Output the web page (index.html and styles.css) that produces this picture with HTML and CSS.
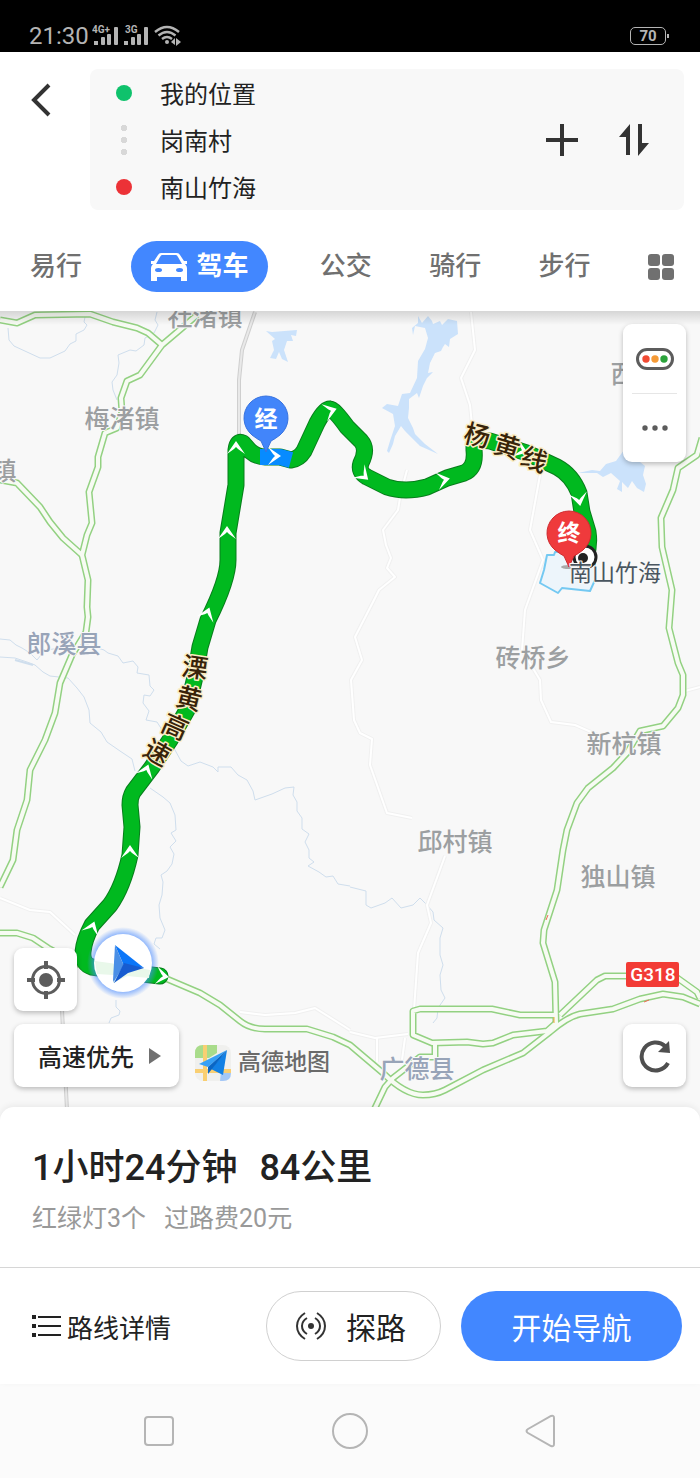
FILE: index.html
```
<!DOCTYPE html>
<html lang="zh-CN">
<head>
    <meta charset="UTF-8">
    <meta name="viewport" content="width=device-width, initial-scale=1.0">
    <title>高德地图 - 路线规划</title>
    <link rel="stylesheet" href="styles.css">
</head>
<body>
    <div class="status-bar">
        <span class="clock">21:30</span>
        <svg class="signals" width="92" height="24" viewBox="0 0 92 24" aria-hidden="true">
            <g fill="#b4b4b4">
                <text x="0" y="9" class="net">4G+</text>
                <text x="33" y="9" class="net">3G</text>
                <rect x="2" y="17" width="4" height="4"/>
                <rect x="9" y="13" width="4" height="8" rx="1"/>
                <rect x="15" y="10" width="4" height="11" rx="1"/>
                <rect x="22" y="3" width="4" height="18" rx="1"/>
                <rect x="32" y="17" width="4" height="4"/>
                <rect x="39" y="13" width="4" height="8" rx="1"/>
                <rect x="45" y="10" width="4" height="11" rx="1"/>
                <rect x="52" y="3" width="4" height="18" rx="1"/>
                <circle cx="75" cy="18" r="2"/>
                <path d="M79 18l4-4v7zM84 14l5 4-5 4z"/>
            </g>
            <g fill="none" stroke="#b4b4b4" stroke-width="2.4">
                <path d="M63 8q12-10 24 0M66.500 11.500q8.500-7 17 0M70 15q5-4 10 0"/>
            </g>
        </svg>
        <span class="battery">70</span>
    </div>

    <header class="header">
        <div class="search">
            <button class="back" aria-label="返回">
                <svg width="20" height="34" viewBox="0 0 20 34"><path d="M18 2L3 17l15 15" fill="none" stroke="#333" stroke-width="4"/></svg>
            </button>
            <div class="stops">
                <ul class="stop-list">
                    <li><span class="dot start"></span>我的位置</li>
                    <li><span class="dots"></span>岗南村</li>
                    <li><span class="dot end"></span>南山竹海</li>
                </ul>
                <button aria-label="添加途经点">
                    <svg width="32" height="32" viewBox="0 0 32 32"><path d="M16 0v32M0 16h32" stroke="#333" stroke-width="4"/></svg>
                </button>
                <button aria-label="交换起终点">
                    <svg width="32" height="32" viewBox="0 0 32 32"><path d="M12 0v31H8V13H1zM20 0h4v19h7L20 32z" fill="#333"/></svg>
                </button>
            </div>
        </div>
        <nav class="tabs">
            <button class="tab">易行</button>
            <button class="tab active">
                <svg width="36" height="30" viewBox="0 0 36 30">
                    <path d="M10 1h16q2 0 3 2l4 6h3v3h-2q2 2 2 4v13h-6v-4H6v4H0V16q0-2 2-4H0V9h3l4-6q1-2 3-2z" fill="#fff"/>
                    <path d="M11 3h14q1 0 2 2l4 7H5l4-7q1-2 2-2z" fill="#4287ff"/>
                    <ellipse cx="7.500" cy="18" rx="3.500" ry="2" fill="#4287ff"/>
                    <ellipse cx="28.500" cy="18" rx="3.500" ry="2" fill="#4287ff"/>
                </svg>
                驾车
            </button>
            <button class="tab">公交</button>
            <button class="tab">骑行</button>
            <button class="tab">步行</button>
            <button class="tab" aria-label="更多">
                <svg width="26" height="26" viewBox="0 0 26 26" fill="#707070">
                    <rect width="12" height="12" rx="3"/><rect x="14" width="12" height="12" rx="3"/>
                    <rect y="14" width="12" height="12" rx="3"/><rect x="14" y="14" width="12" height="12" rx="3"/>
                </svg>
            </button>
        </nav>
    </header>

    <main class="map">
        <svg class="map-canvas" viewBox="0 311 700 810">
            <defs>
                <g id="roads">
                    <path d="M0 320L17 323 35 315 90 314 113 322 137 328 148 333 162 345"/>
                    <path d="M197 315L182 328 162 345 140 375 127 381 121 398 122 412 117 428 105 433 98 457 98 467 89 492 92 523 87 535 82 555 88 580 87 607 88 617 86 632 72 655 60 683 55 713 45 740 30 770 27 800 17 830 13 860 0 887"/>
                    <path d="M0 480L17 483 40 507 50 522 63 538 82 555"/>
                    <path d="M0 933H17L33 938 48 948 80 965"/>
                    <path d="M160 976L200 993 220 1005 240 1021 Q250 1029 265 1029H307L333 1037 350 1045 383 1073 Q405 1095 423 1095 Q435 1095 445 1090L483 1070 523 1053 550 1032 Q567 1017 580 1014L613 1009 640 999 663 994 683 997 700 1004"/>
                    <path d="M557 1015H520L492 1009H420L413 1011V1035L432 1043 467 1042 483 1044 493 1043 513 1035 547 1031 557 1022"/>
                    <path d="M435 1043V1057H420L393 1078 385 1087 374 1110"/>
                    <path d="M702 438L697 455 678 468 673 490 661 518 662 547 672 590 669 628 678 663 683 675 683 695 678 708 663 726 640 731 627 753 613 768 588 788 577 803 567 830 563 850 557 890 544 930 543 943 555 982 556 1023"/>
                    <path d="M560 1015L597 980 605 976H627M676 977L697 992 700 998"/>
                </g>
                <g id="lanes">
                    <path d="M471 312L475 350 461 378 470 405 472 425"/>
                    <path d="M407 470L401 492 398 510 383 530 386 545 391 558 387 568 395 577 379 590 374 600 355 637 362 660 351 680 354 720 360 733 372 739 370 765 387 813 412 818"/>
                    <path d="M540 475L530 530 543 560 525 610 522 650 540 680 541 700 551 722 575 725 598 735"/>
                    <path d="M445 856L427 905 431 923 418 953 414 1010"/>
                    <path d="M350 1032L375 1038 408 1034M377 1038V1062M405 1038L402 1060"/>
                    <path d="M0 898L30 910 50 912 75 935M685 691L700 687"/>
                    <path d="M240 1012L265 1015 295 1013 315 1008 350 1030"/>
                </g>
                <path id="route" d="M160 976L125 972 92 967 Q82 964 83 952 Q84 940 92 925L110 905 Q123 887 130 855L132 827 130 805 Q130 797 133 792L152 767 170 740 187 710 195 677 200 647 208 620 Q228 580 228 560V533L236 485V450Q237 440 243 443L250 451Q257 457 265 457H280L291 460Q299 459 304 451L317 423 Q325 408 330 409 Q334 409 347 427L361 441Q368 449 361 463 Q358 472 367 477L387 487 Q405 493 427 487L447 478 464 473Q476 468 474 450V444Q479 439 490 441L527 453 557 467Q572 475 579 493L582 512 588 532Q590 545 586 557"/>
                <path id="arrow" d="M0 -7L9 6 2 1 0 -1 -2 1 -9 6z"/>
                <linearGradient id="shade" x1="0" y1="0" x2="0" y2="1">
                    <stop offset="0" stop-color="#000" stop-opacity=".14"/>
                    <stop offset="1" stop-color="#000" stop-opacity="0"/>
                </linearGradient>
                <radialGradient id="glow">
                    <stop offset=".8" stop-color="#4d8dff" stop-opacity=".6"/>
                    <stop offset="1" stop-color="#4d8dff" stop-opacity="0"/>
                </radialGradient>
            </defs>

            <rect y="311" width="700" height="810" fill="#f8f8f8"/>

            <!-- lakes -->
            <g fill="#cbe2fb" stroke-linejoin="round">
                <path d="M266 331L272 332 297 330 296 336 291 335 293 341 287 341 284 350 288 362 282 359 279 352 276 359 270 358 274 350 272 341 275 339z"/>
                <path d="M433 324L440 321 442 325 448 319 457 321 458 334 450 339 449 347 445 344 443 347 441 351 435 353 430 363 428 373 433 372 427 378 423 386 419 398 417 393 409 399 409 408 408 418 413 428 415 434 425 444 438 454 420 446 405 431 401 426 395 436 393 444 389 453 387 451 390 441 395 426 393 414 382 408 387 404 398 406 402 394 410 393 417 378 418 361 425 349 428 338 425 328 415 326 413 335 412 328 418 323 418 316 422 323 428 316 432 321z"/>
                <path d="M578 473L592 470 600 471 606 464 616 461 624 450 640 462 645 466 643 475 646 484 644 492 637 488 632 481 628 488 622 482 622 492 617 489 620 481 611 473 603 477 597 473z"/>
            </g>

            <!-- rivers -->
            <g class="river">
                <path d="M85 317L84 322 87 325 84 330 76 334 76 341 70 344 65 351 50 358 40 358 27 352 14 346 9 340 8 328M157 312L155 320 158 325 154 333 145 338 144 345 136 351 130 350 118 355 119 363 117 375 112 382 113 390 117 400"/>
                <path d="M0 639L10 640 16 645 22 648 30 653 37 660 45 650 88 645 104 650 108 653 118 656 123 663 133 661 138 667 137 673 149 675 150 686 154 690 150 696 144 695 143 703 149 711 146 720 157 722 175 750 181 761 188 766 200 762 213 767 218 772 218 767 231 767 238 775 247 780 253 791 255 800 272 794 285 788 294 787 293 795 297 802 297 811 302 818 302 829 309 834 305 842 309 850 309 858 314 862 308 866 319 872 326 877 333 876 338 884 350 886"/>
                <path d="M0 657L15 658 27 662 35 665 43 672 50 676 68 678 77 688 84 697 89 710 90 723 101 732 107 742 120 751 132 759 135 771M150 788L163 797 170 803 175 815 176 830 171 833 176 841 170 847 174 854 172 864 167 871 161 875 163 882 162 895 159 905 160 918 165 930 162 938 156 938 154 944 160 949"/>
                <path stroke-width="2" d="M15 660L33 665"/>
                <path d="M350 887L366 891 366 905 371 908 385 903 392 898 401 908 413 905 420 898 427 905 433 912 434 920 443 928 440 938 440 955 443 965 440 975 441 990 445 998 438 1008 437 1018 433 1023M116 1000L116 1007 120 1011 119 1015 111 1018 109 1023"/>
            </g>

            <!-- minor roads -->
            <use href="#lanes" class="lane-edge"/>
            <use href="#lanes" class="lane-fill"/>
            <g class="railway">
                <path d="M255 312L242 350 239 380V440M62 1010L67 1110" stroke="#cfcfcf" stroke-width="4"/>
                <path d="M255 312L242 350 239 380V440M62 1010L67 1110" stroke="#e9e9e9" stroke-width="2"/>
            </g>

            <use href="#roads" class="road-edge"/>
            <use href="#roads" class="road-fill"/>
            <path d="M554 1017v6" stroke="#f3ac3c"/>
            <path d="M644 1002l5-2M546 920l2-5" stroke="#f06b55"/>

            <path class="region" d="M555 552L554 555 547 555 544 570 540 583 558 593 562 588 590 591 595 580V560L580 550z"/>

            <use href="#route" class="route-edge"/>
            <use href="#route" class="route-fill"/>
            <path d="M260 457H280L291 460" class="route-via"/>

            <g fill="#fff">
                <use href="#arrow" transform="translate(162 976) rotate(98)"/>
                <use href="#arrow" transform="translate(92 928) rotate(20)"/>
                <use href="#arrow" transform="translate(130 852)"/>
                <use href="#arrow" transform="translate(146 771) rotate(20)"/>
                <use href="#arrow" transform="translate(207 614) rotate(20)"/>
                <use href="#arrow" transform="translate(227 533)"/>
                <use href="#arrow" transform="translate(236 448)"/>
                <use href="#arrow" transform="translate(274 456) rotate(90)"/>
                <use href="#arrow" transform="translate(330 411) rotate(72)"/>
                <use href="#arrow" transform="translate(363 475) rotate(132)"/>
                <use href="#arrow" transform="translate(443 480) rotate(78)"/>
                <use href="#arrow" transform="translate(521 450) rotate(110)"/>
                <use href="#arrow" transform="translate(579 499) rotate(170)"/>
            </g>

            <!-- place names -->
            <g class="place">
                <text x="205" y="326">社渚镇</text>
                <text x="122" y="428">梅渚镇</text>
                <text x="4" y="480">镇</text>
                <text x="623" y="383">西</text>
                <text x="533" y="667">砖桥乡</text>
                <text x="624" y="753">新杭镇</text>
                <text x="455" y="851">邱村镇</text>
                <text x="618" y="886">独山镇</text>
                <text x="64" y="653" class="county">郎溪县</text>
                <text x="417" y="1078" class="county">广德县</text>
            </g>
            <g class="road-name">
                <text transform="translate(477 436) rotate(14)" y="9">杨</text>
                <text transform="translate(507 447) rotate(17)" y="9">黄</text>
                <text transform="translate(534 460) rotate(20)" y="9">线</text>
                <text transform="translate(195 668) rotate(8)" y="9">溧</text>
                <text transform="translate(189 699) rotate(14)" y="9">黄</text>
                <text transform="translate(175 727) rotate(24)" y="9">高</text>
                <text transform="translate(157 753) rotate(30)" y="9">速</text>
            </g>
            <rect x="626" y="962" width="53" height="25" rx="2" fill="#f23b35"/>
            <text x="653" y="981" class="shield">G318</text>

            <!-- destination ring, pins -->
            <circle cx="585" cy="557" r="11" fill="#fff" stroke="#222" stroke-width="3"/>
            <circle cx="583" cy="558" r="5" fill="#222"/>
            <ellipse cx="569" cy="567" rx="8" ry="2" fill="#aaa"/>
            <path d="M569 567L564 556Q560 554 555 550A22 22 0 1 1 583 550Q578 554 574 556z" fill="#ef3a3c" stroke="#cf2b30"/>
            <text x="569" y="541" class="pin">终</text>
            <path d="M266 452L261 441Q257 439 252 435A22 22 0 1 1 280 435Q275 439 271 441z" fill="#4285fa" stroke="#3873df"/>
            <text x="266" y="427" class="pin">经</text>
            <text x="615" y="581" class="poi">南山竹海</text>

            <!-- current position -->
            <circle cx="123" cy="963" r="36" fill="url(#glow)"/>
            <circle cx="123" cy="963" r="29" fill="#fff"/>
            <path d="M95 961Q120 964 150 970L149 978Q120 975 97 974z" fill="#e9f8ea"/>
            <path d="M115 945L144 968 124 966z" fill="#0b76f8"/>
            <path d="M115 945L124 966 114 983 113 980z" fill="#4a8fe6"/>
            <path d="M144 968L124 965 113 983z" fill="#e9f8ea"/>
            <path d="M144 968L124 963 114 983 128 973z" fill="#175cd0"/>

            <rect y="311" width="700" height="14" fill="url(#shade)"/>
        </svg>

        <div class="float side-tools">
            <button aria-label="路况">
                <svg width="38" height="22" viewBox="0 0 38 22">
                    <rect x="1.500" y="1.500" width="35" height="19" rx="9.500" fill="#fff" stroke="#5c5c5c" stroke-width="3"/>
                    <circle cx="10" cy="11" r="3.700" fill="#f04a33"/><circle cx="19" cy="11" r="3.700" fill="#f59a36"/><circle cx="28" cy="11" r="3.700" fill="#2ba33b"/>
                </svg>
            </button>
            <button aria-label="更多工具">
                <svg width="26" height="6" viewBox="0 0 26 6" fill="#5c5c5c"><circle cx="3" cy="3" r="2.700"/><circle cx="13" cy="3" r="2.700"/><circle cx="23" cy="3" r="2.700"/></svg>
            </button>
        </div>

        <div class="bottom-tools">
            <div class="left-tools">
                <button class="float square" aria-label="定位">
                    <svg width="38" height="38" viewBox="0 0 38 38">
                        <path d="M19 0v8M19 30v8M0 19h8M30 19h8" stroke="#5c5c5c" stroke-width="4"/>
                        <circle cx="19" cy="19" r="13.500" fill="none" stroke="#5c5c5c" stroke-width="3"/>
                        <circle cx="19" cy="19" r="7" fill="#5c5c5c"/>
                    </svg>
                </button>
                <div class="prefer-row">
                    <button class="float prefer">高速优先
                        <svg width="12" height="16" viewBox="0 0 12 16"><path d="M0 0l12 8-12 8z" fill="#707070"/></svg>
                    </button>
                    <div class="logo">
                        <svg width="36" height="36" viewBox="0 0 36 36">
                            <rect width="36" height="36" rx="8" fill="#f0f0ee"/>
                            <path d="M8 0h14v8l-8 5H0V8Q0 0 8 0z" fill="#a9dc8b"/>
                            <path d="M25 36l1-9 10-2v3q0 8-8 8z" fill="#a5c8f7"/>
                            <path d="M10 0v36M0 26h36" stroke="#f9cf72" stroke-width="4"/>
                            <path d="M32 5L4 19l9 3z" fill="#36a0f6"/>
                            <path d="M32 5L16 24l12 6z" fill="#1280e4"/>
                            <path d="M32 5L13 22v7l4-5z" fill="#0a66c4"/>
                        </svg>
                        <span>高德地图</span>
                    </div>
                </div>
            </div>
            <button class="float square" aria-label="刷新">
                <svg width="34" height="34" viewBox="0 0 34 34">
                    <path d="M30 24A14 14 0 1 1 27 7" fill="none" stroke="#4f4f4f" stroke-width="4"/>
                    <path d="M31 2l1 12-12-1z" fill="#4f4f4f"/>
                </svg>
            </button>
        </div>
    </main>

    <section class="panel">
        <div class="summary">
            <h1><span>1小时24分钟</span><span>84公里</span></h1>
            <p><span>红绿灯3个</span><span>过路费20元</span></p>
        </div>
        <div class="actions">
            <a class="detail" href="#detail">
                <svg width="29" height="22" viewBox="0 0 29 22"><path d="M6 2h23M6 11h23M6 20h23" stroke="#222" stroke-width="2"/><path d="M0 2h4M0 11h4M0 20h4" stroke="#222" stroke-width="4"/></svg>
                路线详情
            </a>
            <button class="explore">
                <svg width="30" height="28" viewBox="0 0 30 28" fill="none" stroke="#333" stroke-width="2">
                    <circle cx="15" cy="14" r="3" fill="#333" stroke="none"/>
                    <path d="M11 6q-5 3-5 8t5 8M19 6q5 3 5 8t-5 8M9 1Q1 6 1 14t8 13M21 1q8 5 8 13t-8 13"/>
                </svg>
                探路
            </button>
            <button class="go">开始导航</button>
        </div>
    </section>

    <footer class="nav-bar">
        <button aria-label="最近任务"><svg width="36" height="36" viewBox="0 0 36 36"><rect x="4" y="4" width="28" height="28" rx="3"/></svg></button>
        <button aria-label="主屏幕"><svg width="36" height="36" viewBox="0 0 36 36"><circle cx="18" cy="18" r="17"/></svg></button>
        <button aria-label="返回"><svg width="36" height="36" viewBox="0 0 36 36"><path d="M5 16L28 3q3-1 3 2v26q0 3-3 2L5 20q-3-2 0-4z"/></svg></button>
    </footer>
</body>
</html>
```
FILE: styles.css
```
/* General Styles */
* {
    box-sizing: border-box;
}

body {
    margin: 0;
    min-height: 100vh;
    display: flex;
    flex-direction: column;
    font-family: Roboto, "Noto Sans CJK SC", sans-serif;
    color: #222;
    background-color: #fff;
}

button {
    padding: 0;
    border: none;
    background: none;
    font: inherit;
    color: inherit;
    cursor: pointer;
}

svg {
    display: block;
    flex: none;
}

/* Status bar */
.status-bar {
    display: flex;
    align-items: center;
    height: 52px;
    padding: 20px 34px 0 29px;
    background-color: #000;
    color: #b4b4b4;
}

.clock {
    font-size: 24px;
    margin-right: 3px;
}

.net {
    font-size: 10px;
    font-weight: 700;
}

.battery {
    position: relative;
    width: 36px;
    height: 18px;
    margin-left: auto;
    border: 1px solid #b4b4b4;
    border-radius: 5px;
    font-size: 15px;
    font-weight: 700;
    line-height: 17px;
    text-align: center;
}

.battery::after {
    content: "";
    position: absolute;
    top: 6px;
    right: -4px;
    width: 2px;
    height: 4px;
    background-color: #b4b4b4;
}

/* Header */
.header {
    background-color: #fff;
}

.search {
    display: flex;
    align-items: flex-start;
    padding: 17px 16px 0 31px;
}

.back {
    width: 20px;
    margin: 14px 39px 0 0;
}

.stops {
    flex: 1;
    display: flex;
    align-items: center;
    gap: 40px;
    padding-right: 34px;
    border-radius: 8px;
    background-color: #f8f8f8;
}

.stop-list {
    flex: 1;
    margin: 0;
    padding: 0 0 0 26px;
    list-style: none;
    font-size: 24px;
}

.stop-list li {
    display: flex;
    align-items: center;
    gap: 28px;
    height: 47px;
}

.dot {
    width: 16px;
    height: 16px;
    border-radius: 50%;
}

.start {
    background-color: #0fc26c;
}

.end {
    background-color: #ec3237;
}

.dots {
    width: 16px;
    height: 30px;
    background: radial-gradient(circle, #d8d8d8 3px, transparent 3px) center / 16px 12px;
    background-position: 0 -3px;
}

/* Tabs */
.tabs {
    display: flex;
    justify-content: space-between;
    align-items: center;
    padding: 31px 26px 19px 30px;
}

.tab {
    font-size: 26px;
    font-weight: 500;
    line-height: 51px;
    color: #707070;
}

.tab.active {
    display: flex;
    align-items: center;
    gap: 9px;
    margin: 0 -6px 0 -8px;
    padding: 0 20px;
    border-radius: 26px;
    background-color: #4287ff;
    color: #fff;
    font-weight: 700;
}

/* Map */
.map {
    position: relative;
}

.map-canvas {
    width: 100%;
    height: auto;
}

.river,
.railway,
.lane-edge,
.lane-fill,
.road-edge,
.road-fill,
.route-edge,
.route-fill,
.route-via {
    fill: none;
    stroke-linejoin: round;
}

.river {
    stroke: #cfdeed;
    stroke-width: 1px;
}

.lane-edge {
    stroke: #f0f0f0;
    stroke-width: 4px;
}

.lane-fill {
    stroke: #fff;
    stroke-width: 2px;
}

.road-edge {
    stroke: #93d182;
    stroke-width: 7px;
}

.road-fill {
    stroke: #f7fbf3;
    stroke-width: 4px;
}

.route-edge {
    stroke: #087d1c;
    stroke-width: 17px;
    stroke-linecap: round;
}

.route-fill {
    stroke: #00b91f;
    stroke-width: 15px;
    stroke-linecap: round;
}

.route-via {
    stroke: #078bff;
    stroke-width: 16px;
}

.region {
    fill: #edf5fb;
    stroke: #74c9f2;
    stroke-width: 2px;
    stroke-linejoin: round;
}

.place,
.road-name,
.pin,
.poi,
.shield {
    text-anchor: middle;
    paint-order: stroke;
    stroke-linejoin: round;
}

.place {
    font-size: 25px;
    font-weight: 500;
    fill: #9c9fa1;
    stroke: #f8f8f8;
    stroke-width: 2px;
}

.county {
    fill: #98a4b8;
}

.road-name {
    font-size: 26px;
    font-weight: 500;
    fill: #382309;
    stroke: #fbedc4;
    stroke-width: 3px;
}

.pin {
    font-size: 23px;
    font-weight: 700;
    fill: #fff;
}

.poi {
    font-size: 23px;
    fill: #4a5660;
    stroke: #f8f8f8;
    stroke-width: 2px;
}

.shield {
    font-size: 19px;
    font-weight: 500;
    fill: #fff;
}

/* Map controls */
.float {
    border-radius: 9px;
    background-color: #fff;
    box-shadow: 0 2px 5px rgba(0, 0, 0, 0.25);
}

.side-tools {
    position: absolute;
    top: 13px;
    right: 14px;
    width: 63px;
    padding: 0 9px;
}

.side-tools button {
    display: flex;
    align-items: center;
    justify-content: center;
    width: 100%;
    height: 69px;
}

.side-tools button + button {
    border-top: 1px solid #e6e6e6;
}

.bottom-tools {
    position: absolute;
    left: 14px;
    right: 14px;
    bottom: 34px;
    display: flex;
    justify-content: space-between;
    align-items: flex-end;
}

.left-tools {
    display: flex;
    flex-direction: column;
    gap: 13px;
}

.square {
    display: flex;
    align-items: center;
    justify-content: center;
    width: 63px;
    height: 63px;
}

.prefer-row {
    display: flex;
    align-items: center;
    gap: 16px;
}

.prefer {
    display: flex;
    align-items: center;
    gap: 15px;
    height: 63px;
    padding: 0 18px 0 24px;
    font-size: 24px;
    font-weight: 500;
}

.logo {
    display: flex;
    align-items: center;
    gap: 7px;
    padding-top: 14px;
    font-size: 23px;
    font-weight: 500;
    line-height: 36px;
    color: #6a6a6a;
}

/* Bottom panel */
.panel {
    position: relative;
    margin-top: -14px;
    border-radius: 14px 14px 0 0;
    background-color: #fff;
    box-shadow: 0 -2px 6px rgba(0, 0, 0, 0.06);
}

.summary {
    padding: 38px 32px 31px;
    border-bottom: 1px solid #d6d6d6;
}

.summary h1,
.summary p {
    display: flex;
    margin: 0;
}

.summary h1 {
    gap: 22px;
    font-size: 36px;
    font-weight: 500;
    line-height: 46px;
}

.summary p {
    gap: 18px;
    margin-top: 10px;
    font-size: 25px;
    line-height: 35px;
    color: #999;
}

.actions {
    display: flex;
    align-items: center;
    padding: 23px 18px 23px 32px;
}

.detail {
    display: flex;
    align-items: center;
    gap: 6px;
    margin-right: auto;
    font-size: 26px;
    color: #222;
    text-decoration: none;
}

.explore,
.go {
    height: 70px;
    border-radius: 35px;
    font-size: 30px;
}

.explore {
    display: flex;
    align-items: center;
    gap: 20px;
    width: 175px;
    padding-left: 29px;
    margin-right: 20px;
    border: 1px solid #d0d0d0;
}

.go {
    width: 221px;
    background-color: #4287ff;
    color: #fff;
}

/* System navigation */
.nav-bar {
    flex: 1;
    display: flex;
    justify-content: center;
    align-items: center;
    gap: 155px;
    min-height: 94px;
    background-color: #fbfbfb;
}

.nav-bar svg {
    fill: none;
    stroke: #b5b5b5;
    stroke-width: 2px;
}
```
